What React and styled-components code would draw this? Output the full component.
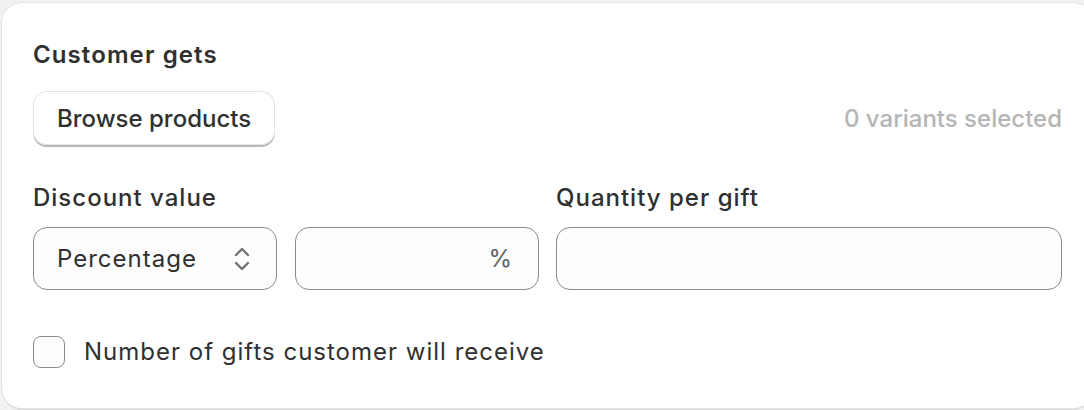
import React from "react";
import styled, { createGlobalStyle } from "styled-components";

const GlobalStyle = createGlobalStyle`
  html, body {
    margin: 0;
    padding: 0;
    background: #f1f1f1;
    overflow: hidden;
  }
  body {
    font-family: Inter, "Noto Sans", sans-serif;
    color: #303030;
  }
`;

const Page = styled.div`
  padding: 3px 0 0 2px;
  width: 1084px;
  height: 410px;
  box-sizing: border-box;
`;

const Card = styled.section`
  width: 1091px;
  box-sizing: border-box;
  background: #fff;
  border-radius: 20px;
  box-shadow: 0 0 0 1px #e4e4e4, 0 2px 0 0 #d9d9d9;
  padding: 36px 31px 40px 31px;
  display: flex;
  flex-direction: column;
`;

const Heading = styled.h2`
  margin: 0;
  font-size: 24px;
  line-height: 32px;
  font-weight: 600;
  letter-spacing: 1.1px;
`;

const BrowseRow = styled.div`
  margin-top: 20px;
  display: flex;
  align-items: center;
  justify-content: space-between;
`;

const Button = styled.button`
  height: 54px;
  padding: 0 24px;
  border: none;
  border-radius: 14px;
  background: #fff;
  font-family: inherit;
  font-size: 24px;
  font-weight: 500;
  color: #303030;
  box-shadow: inset 0 0 0 1px #e3e3e3, 0 2px 0 0 #b8b8b8;
  cursor: pointer;
`;

const Muted = styled.span`
  font-size: 24px;
  color: #b5b5b5;
  font-weight: 500;
`;

const Fields = styled.div`
  margin-top: 38px;
  display: grid;
  grid-template-columns: 1fr 1fr;
  column-gap: 17px;
`;

const Field = styled.div`
  display: flex;
  flex-direction: column;
  gap: 14px;
`;

const Label = styled.label`
  font-size: 24px;
  line-height: 30px;
  font-weight: 500;
  letter-spacing: 1px;
`;

const Inline = styled.div`
  display: grid;
  grid-template-columns: 244px 1fr;
  gap: 18px;
`;

const Box = styled.div`
  height: 63px;
  box-sizing: border-box;
  border: 1.5px solid #8a8a8a;
  border-radius: 14px;
  background: #fdfdfd;
  display: flex;
  align-items: center;
  justify-content: ${(p) => p.$justify || "flex-start"};
  padding: 0 ${(p) => p.$pr || 23}px 0 23px;
  font-size: 24px;
  letter-spacing: 1px;
  color: ${(p) => (p.$muted ? "#616161" : "#303030")};
`;

const CheckRow = styled.label`
  margin-top: 46px;
  display: flex;
  align-items: center;
  gap: 19px;
  font-size: 24px;
  line-height: 32px;
  letter-spacing: 1px;
`;

const Check = styled.span`
  width: 32px;
  height: 32px;
  box-sizing: border-box;
  border: 1.5px solid #8a8a8a;
  border-radius: 8px;
  background: #fdfdfd;
`;

const Chevrons = () => (
  <svg width="16" height="26" viewBox="0 0 16 26" fill="none"
    stroke="#707070" strokeWidth="2.4" strokeLinecap="round" strokeLinejoin="round">
    <polyline points="2,9 8,3 14,9" />
    <polyline points="2,17 8,23 14,17" />
  </svg>
);

export default function App() {
  return (
    <>
      <GlobalStyle />
      <Page>
        <Card>
          <Heading>Customer gets</Heading>
          <BrowseRow>
            <Button>Browse products</Button>
            <Muted>0 variants selected</Muted>
          </BrowseRow>
          <Fields>
            <Field>
              <Label>Discount value</Label>
              <Inline>
                <Box $justify="space-between" $pr={26}>
                  Percentage
                  <Chevrons />
                </Box>
                <Box $justify="flex-end" $pr={25} $muted>%</Box>
              </Inline>
            </Field>
            <Field>
              <Label>Quantity per gift</Label>
              <Box />
            </Field>
          </Fields>
          <CheckRow>
            <Check />
            Number of gifts customer will receive
          </CheckRow>
        </Card>
      </Page>
    </>
  );
}
